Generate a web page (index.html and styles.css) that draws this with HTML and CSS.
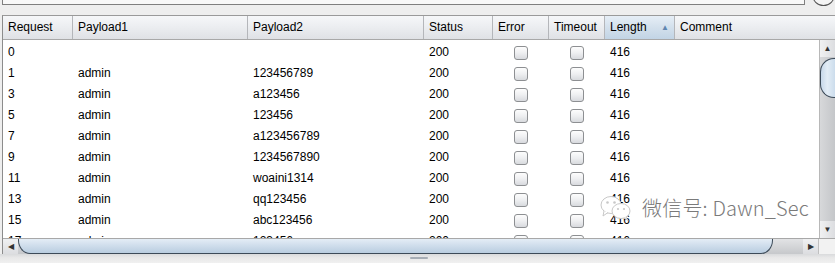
FILE: index.html
```html
<!DOCTYPE html>
<html>
<head>
<meta charset="utf-8">
<link rel="stylesheet" href="styles.css">
</head>
<body>
<div class="topbar">
  <div class="field"></div>
  <div class="roundbtn"></div>
</div>
<div class="panel">
  <div class="thead">
    <div class="th">Request</div>
    <div class="th">Payload1</div>
    <div class="th">Payload2</div>
    <div class="th">Status</div>
    <div class="th">Error</div>
    <div class="th">Timeout</div>
    <div class="th sorted">Length<span class="sort">&#9650;</span></div>
    <div class="th last">Comment</div>
  </div>
  <div class="bodywrap">
    <div class="rows">
      <div class="row"><div class="td">0</div><div class="td"></div><div class="td"></div><div class="td">200</div><div class="td c"><span class="cb"></span></div><div class="td c"><span class="cb"></span></div><div class="td">416</div><div class="td"></div></div>
      <div class="row"><div class="td">1</div><div class="td">admin</div><div class="td">123456789</div><div class="td">200</div><div class="td c"><span class="cb"></span></div><div class="td c"><span class="cb"></span></div><div class="td">416</div><div class="td"></div></div>
      <div class="row"><div class="td">3</div><div class="td">admin</div><div class="td">a123456</div><div class="td">200</div><div class="td c"><span class="cb"></span></div><div class="td c"><span class="cb"></span></div><div class="td">416</div><div class="td"></div></div>
      <div class="row"><div class="td">5</div><div class="td">admin</div><div class="td">123456</div><div class="td">200</div><div class="td c"><span class="cb"></span></div><div class="td c"><span class="cb"></span></div><div class="td">416</div><div class="td"></div></div>
      <div class="row"><div class="td">7</div><div class="td">admin</div><div class="td">a123456789</div><div class="td">200</div><div class="td c"><span class="cb"></span></div><div class="td c"><span class="cb"></span></div><div class="td">416</div><div class="td"></div></div>
      <div class="row"><div class="td">9</div><div class="td">admin</div><div class="td">1234567890</div><div class="td">200</div><div class="td c"><span class="cb"></span></div><div class="td c"><span class="cb"></span></div><div class="td">416</div><div class="td"></div></div>
      <div class="row"><div class="td">11</div><div class="td">admin</div><div class="td">woaini1314</div><div class="td">200</div><div class="td c"><span class="cb"></span></div><div class="td c"><span class="cb"></span></div><div class="td">416</div><div class="td"></div></div>
      <div class="row"><div class="td">13</div><div class="td">admin</div><div class="td">qq123456</div><div class="td">200</div><div class="td c"><span class="cb"></span></div><div class="td c"><span class="cb"></span></div><div class="td">416</div><div class="td"></div></div>
      <div class="row"><div class="td">15</div><div class="td">admin</div><div class="td">abc123456</div><div class="td">200</div><div class="td c"><span class="cb"></span></div><div class="td c"><span class="cb"></span></div><div class="td">416</div><div class="td"></div></div>
      <div class="row"><div class="td">17</div><div class="td">admin</div><div class="td">123456a</div><div class="td">200</div><div class="td c"><span class="cb"></span></div><div class="td c"><span class="cb"></span></div><div class="td">416</div><div class="td"></div></div>
    </div>
    <div class="vscroll">
      <div class="vbtn up">&#9650;</div>
      <div class="vtrack"><div class="vthumb"></div></div>
      <div class="vbtn down">&#9660;</div>
    </div>
  </div>
  <div class="hscroll">
    <div class="hbtn">&#9664;</div>
    <div class="htrack"><div class="hthumb"></div></div>
    <div class="hbtn">&#9654;</div>
    <div class="corner"></div>
  </div>
</div>
<div class="footer"><div class="grip"></div></div>
<div class="watermark">
  <svg class="wxicon" width="32" height="26" viewBox="0 0 32 26">
    <ellipse cx="11" cy="10" rx="10" ry="8.5" fill="#fff" stroke="#c8c8c8" stroke-width="1"/>
    <path d="M4 16 L3 21 L8 17.5" fill="#fff" stroke="#c8c8c8" stroke-width="1"/>
    <circle cx="7.5" cy="7.5" r="1.3" fill="#c8c8c8"/>
    <circle cx="14.5" cy="7.5" r="1.3" fill="#c8c8c8"/>
    <ellipse cx="21" cy="16" rx="9" ry="7.5" fill="#fff" stroke="#c8c8c8" stroke-width="1"/>
    <path d="M26 22 L28 25.5 L24 23" fill="#fff" stroke="#c8c8c8" stroke-width="1"/>
    <circle cx="18" cy="14" r="1.1" fill="#c8c8c8"/>
    <circle cx="24" cy="14" r="1.1" fill="#c8c8c8"/>
  </svg>
  <span class="wxtext">微信号: Dawn_Sec</span>
</div>
</body>
</html>
```
FILE: styles.css
```css
html, body {
  margin: 0;
  padding: 0;
}
body {
  width: 835px;
  height: 263px;
  overflow: hidden;
  background: #eeeeee;
  font-family: "Liberation Sans", Arial, sans-serif;
  font-size: 12px;
  color: #000;
  position: relative;
}
.topbar {
  height: 15px;
  display: flex;
  align-items: flex-start;
}
.field {
  margin-left: 2px;
  width: 804px;
  height: 4px;
  background: #f8f8f8;
  border: 1px solid #7f7f7f;
  border-top: none;
}
.roundbtn {
  margin-left: 7px;
  margin-top: -17px;
  width: 21px;
  height: 21px;
  border-radius: 50%;
  border: 1px solid #555;
  background: #f4f4f4;
}
.panel {
  margin-left: 2px;
  border-left: 1px solid #8c8c8c;
  border-top: 1px solid #9a9a9a;
  background: #fff;
}
.thead {
  display: grid;
  grid-template-columns: 70px 175px 176px 69px 56px 56px 70px 1fr;
  height: 24px;
  box-sizing: border-box;
  border-bottom: 1px solid #a8a8a8;
  background: linear-gradient(#f6f7f9 0%, #eceef1 45%, #dfe1e5 100%);
}
.th {
  box-sizing: border-box;
  border-right: 1px solid #b4b6ba;
  padding-left: 5px;
  line-height: 23px;
  white-space: nowrap;
  overflow: hidden;
  position: relative;
}
.th.last { border-right: none; }
.th.sorted {
  background: linear-gradient(#e6eef6 0%, #d3e0ec 50%, #c2d4e5 100%);
}
.sort {
  position: absolute;
  left: 56px;
  top: 0;
  font-size: 8px;
  color: #5f86b0;
}
.bodywrap {
  display: flex;
  height: 198px;
}
.rows {
  flex: 1;
  overflow: hidden;
  background: #fff;
  padding-top: 2px;
}
.row {
  display: grid;
  grid-template-columns: 70px 175px 176px 69px 56px 56px 70px 1fr;
  height: 21px;
}
.td {
  padding-left: 5px;
  line-height: 21px;
  white-space: nowrap;
  overflow: hidden;
}
.td.c {
  padding-left: 0;
  display: flex;
  align-items: center;
  justify-content: center;
}
.cb {
  width: 12px;
  height: 12px;
  border: 1px solid #8d8f92;
  border-radius: 3px;
  background: linear-gradient(#fdfdfd 0%, #eeeff1 50%, #d8dade 100%);
}
.vscroll {
  width: 16px;
  display: flex;
  flex-direction: column;
  background: linear-gradient(90deg, #d7d8da 0%, #c4c6c9 100%);
  border-left: 1px solid #b8b8b8;
  box-sizing: border-box;
}
.vbtn {
  height: 17px;
  font-size: 8px;
  color: #333;
  text-align: center;
  line-height: 17px;
  background: linear-gradient(90deg, #f0f1f2, #dcdde0);
}
.vtrack {
  flex: 1;
  position: relative;
}
.vthumb {
  margin-top: 1px;
  height: 38px;
  border: 1px solid #3c4a58;
  border-right: none;
  border-radius: 14px 0 0 14px;
  background: linear-gradient(90deg, #c7d8ea 0%, #e3edf6 45%, #cbdcec 100%);
}
.hscroll {
  display: flex;
  height: 16px;
  border-top: 1px solid #a8a8a8;
  box-sizing: border-box;
  background: linear-gradient(#e2e3e5 0%, #c6c8cb 100%);
}
.hbtn {
  width: 15px;
  font-size: 8px;
  color: #333;
  text-align: center;
  line-height: 15px;
  background: linear-gradient(#f0f1f2, #dcdde0);
}
.htrack {
  flex: 1;
  display: flex;
}
.hthumb {
  width: 755px;
  height: 15px;
  box-sizing: border-box;
  border: 1px solid #3c4a58;
  border-top: none;
  border-radius: 0 0 12px 12px / 0 0 14px 14px;
  background: linear-gradient(#e4edf6 0%, #d0deec 45%, #b9cde0 100%);
}
.corner {
  width: 16px;
  background: #f2f2f2;
  border-left: 1px solid #c0c0c0;
}
.footer {
  height: 9px;
  background: linear-gradient(#d9dadc 0%, #e8e8e8 40%, #f0f0f0 100%);
  position: relative;
}
.grip {
  position: absolute;
  left: 410px;
  top: 3px;
  width: 18px;
  height: 2px;
  background: #a6adb5;
  border-radius: 1px;
}
.watermark {
  position: absolute;
  left: 600px;
  top: 193px;
  display: flex;
  align-items: center;
  gap: 10px;
}
.wxtext {
  font-family: "Noto Sans CJK SC", "DejaVu Sans", sans-serif;
  font-size: 20px;
  font-weight: 300;
  color: #7a7a7a;
  text-shadow: 0 0 2px #fff, 0 0 2px #fff;
  letter-spacing: 0.2px;
}
```
